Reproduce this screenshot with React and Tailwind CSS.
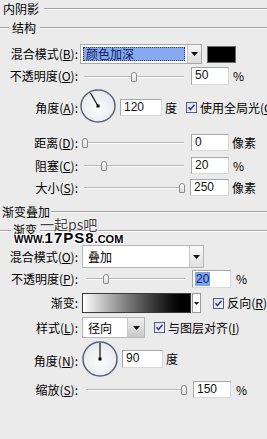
import React from "react";

const Line = ({ className = "" }) => (
  <div className={"h-[2px] border-t border-[#a3a3a3] border-b border-b-white " + className} />
);

const Label = ({ children, className = "" }) => (
  <div className={"w-[78px] shrink-0 text-right text-[12px] leading-[14px] whitespace-nowrap " + className}>{children}</div>
);

const Tri = () => (
  <svg width="7" height="4" viewBox="0 0 7 4"><path d="M0 0H7L3.5 4Z" fill="#111" /></svg>
);

const Slider = ({ v, w = "w-[106px]" }) => (
  <div className={"relative h-[12px] shrink-0 " + w}>
    <div className="absolute left-[2px] right-[4px] top-[5px] h-[2px] border-t border-[#b8b8b8] border-b border-b-white" />
    <div
      className="absolute top-[1px] w-[6px] h-[10px] rounded-t-[3px] rounded-b-[1px] border border-[#8a8a8a] bg-gradient-to-b from-white to-[#dcdcdc]"
      style={{ left: `${v * 97}px` }}
    />
  </div>
);

const Input = ({ children, className = "" }) => (
  <div className={"h-[17px] w-[38px] shrink-0 bg-white border border-[#a7a7a7] border-b-[#d8d8d8] border-r-[#d8d8d8] pl-[3px] text-[12px] leading-[15px] font-['Liberation_Sans',sans-serif] text-[#111] " + className}>
    {children}
  </div>
);

const Check = () => (
  <svg width="11" height="11" viewBox="0 0 11 11" className="shrink-0">
    <defs>
      <linearGradient id="cg" x1="0" y1="0" x2="1" y2="1">
        <stop offset="0" stopColor="#dcdce4" />
        <stop offset="1" stopColor="#f8f8fb" />
      </linearGradient>
    </defs>
    <rect x="0.5" y="0.5" width="10" height="10" fill="url(#cg)" stroke="#4c5f86" />
    <path d="M2.5 5.2L4.5 7.5L8.5 2.8" fill="none" stroke="#3a3f8f" strokeWidth="1.6" />
  </svg>
);

const Dial = ({ angle, w = 36, h = 34 }) => {
  const cx = w / 2, cy = h / 2, r = Math.min(w, h) / 2 - 1;
  const a = (angle * Math.PI) / 180;
  const x2 = cx + Math.cos(a) * (r - 1);
  const y2 = cy - Math.sin(a) * (r - 1);
  return (
    <svg width={w} height={h} viewBox={`0 0 ${w} ${h}`} className="shrink-0">
      <defs>
        <radialGradient id={"dg" + angle} cx="0.5" cy="0.6" r="0.6">
          <stop offset="0" stopColor="#fbfbfb" />
          <stop offset="1" stopColor="#e6e8ee" />
        </radialGradient>
      </defs>
      <ellipse cx={cx} cy={cy} rx={w / 2 - 1} ry={h / 2 - 1} fill={`url(#dg${angle})`} stroke="#5a6478" strokeWidth="1.5" />
      <line x1={cx} y1={cy} x2={x2} y2={y2} stroke="#111" strokeWidth="1.2" />
      <rect x={cx - 1.5} y={cy - 1.5} width="3" height="3" fill="#000" />
    </svg>
  );
};

export default function App() {
  return (
    <div className="w-[267px] h-[439px] overflow-hidden bg-[#ebebeb] text-black font-['Noto_Sans_CJK_SC','Liberation_Sans',sans-serif]">
      {/* 内阴影 header */}
      <div className="mt-[2px] h-[13px] flex items-center pl-[3px]">
        <span className="text-[12px] leading-[13px] whitespace-nowrap">内阴影</span>
        <Line className="flex-1 ml-[5px] mt-[1px]" />
      </div>
      {/* 结构 */}
      <div className="mt-[5px] h-[14px] flex items-center">
        <Line className="w-[9px] mt-[1px]" />
        <span className="ml-[3px] text-[12px] leading-[13px] whitespace-nowrap">结构</span>
        <Line className="flex-1 ml-[4px] mt-[1px]" />
      </div>

      {/* blend mode 1 */}
      <div className="mt-[10px] h-[20px] flex items-center">
        <Label>混合模式(<u>B</u>):</Label>
        <div className="ml-[2px] w-[122px] h-[20px] flex border border-[#a9a9a9] bg-white">
          <div className="flex-1 p-[2px]">
            <div className="h-full bg-[#86a9ef] border border-dotted border-[#2a3a70] text-[12px] leading-[12px] pl-[2px] text-[#0d1a5c]">颜色加深</div>
          </div>
          <div className="w-[14px] flex items-center justify-center border-l border-[#c8c8c8] bg-gradient-to-b from-[#f6f6f6] to-[#dcdcdc]">
            <Tri />
          </div>
        </div>
        <div className="ml-[5px] w-[29px] h-[17px] bg-black border border-[#6a6a6a]" />
      </div>

      {/* opacity 1 */}
      <div className="mt-[2px] h-[19px] flex items-center">
        <Label>不透明度(<u>O</u>):</Label>
        <div className="ml-[4px] mt-[3px]"><Slider v={0.5} /></div>
        <Input className="ml-[3px] h-[18px]">50</Input>
        <span className="ml-[4px] text-[12px] leading-[14px]">%</span>
      </div>

      {/* angle 1 */}
      <div className="mt-[4px] h-[34px] flex items-center">
        <Label className="mt-[4px]">角度(<u>A</u>):</Label>
        <div className="ml-[2px]"><Dial angle={120} /></div>
        <Input className="ml-[4px] w-[42px] mt-[3px]">120</Input>
        <span className="ml-[3px] text-[12px] leading-[14px] mt-[3px]">度</span>
        <div className="ml-[9px] mt-[3px] flex items-center">
          <Check />
          <span className="ml-[3px] text-[12px] leading-[14px] whitespace-nowrap">使用全局光(<u>G</u>)</span>
        </div>
      </div>

      {/* distance */}
      <div className="mt-[11px] h-[17px] flex items-center">
        <Label>距离(<u>D</u>):</Label>
        <div className="ml-[4px]"><Slider v={0} /></div>
        <Input className="ml-[3px]">0</Input>
        <span className="ml-[3px] text-[12px] leading-[14px]">像素</span>
      </div>

      {/* choke */}
      <div className="mt-[6px] h-[17px] flex items-center">
        <Label>阻塞(<u>C</u>):</Label>
        <div className="ml-[4px]"><Slider v={0.2} /></div>
        <Input className="ml-[3px]">20</Input>
        <span className="ml-[4px] text-[12px] leading-[14px]">%</span>
      </div>

      {/* size */}
      <div className="mt-[5px] h-[17px] flex items-center">
        <Label>大小(<u>S</u>):</Label>
        <div className="ml-[4px]"><Slider v={1} /></div>
        <Input className="ml-[2px] w-[39px]">250</Input>
        <span className="ml-[3px] text-[12px] leading-[14px]">像素</span>
      </div>

      {/* 渐变叠加 */}
      <div className="mt-[9px] h-[13px] flex items-center pl-[2px]">
        <span className="text-[12px] leading-[13px] whitespace-nowrap">渐变叠加</span>
        <Line className="flex-1 ml-[1px] mt-[1px]" />
      </div>

      <div className="relative">
        {/* 渐变 */}
        <div className="mt-[5px] h-[13px] flex items-center">
          <Line className="w-[11px] mt-[2px]" />
          <span className="ml-[2px] text-[12px] leading-[13px] whitespace-nowrap">渐变</span>
          <Line className="flex-1 ml-[3px] mt-[2px]" />
        </div>
        {/* watermark */}
        <div className="absolute left-[40px] top-[-6px] text-[14px] leading-[15px] text-[#444] whitespace-nowrap [text-shadow:0_0_2px_#fff,0_0_2px_#fff]">一起ps吧</div>
        <div className="absolute left-[14px] top-[9px] flex items-baseline whitespace-nowrap font-['Liberation_Sans',sans-serif] font-black text-black [text-shadow:1px_1px_0_#fff,-1px_-1px_0_#fff,1px_-1px_0_#fff,-1px_1px_0_#fff]">
          <span className="text-[10px] leading-[10px] tracking-[0px]">WWW.</span>
          <span className="text-[15px] leading-[12px] tracking-[1px]">17PS8</span>
          <span className="text-[11px] leading-[10px]">.COM</span>
        </div>

        {/* blend mode 2 */}
        <div className="mt-[9px] h-[23px] flex items-center">
          <Label>混合模式(<u>O</u>):</Label>
          <div className="ml-[4px] w-[122px] h-[23px] flex border border-[#b5b5b5] bg-white">
            <div className="flex-1 pl-[5px] text-[12px] leading-[21px]">叠加</div>
            <div className="w-[14px] flex items-center justify-center border-l border-[#c8c8c8] bg-gradient-to-b from-[#fafafa] to-[#e0e0e0]">
              <Tri />
            </div>
          </div>
        </div>

        {/* opacity 2 */}
        <div className="mt-[2px] h-[18px] flex items-center">
          <Label>不透明度(<u>P</u>):</Label>
          <div className="ml-[6px]"><Slider v={0.2} w="w-[105px]" /></div>
          <div className="ml-[3px] h-[18px] w-[39px] shrink-0 flex items-center bg-white border border-[#a7a7a7] border-b-[#d8d8d8] border-r-[#d8d8d8] pl-[2px]">
            <span className="bg-[#7ea3e6] text-[#0b2170] text-[12px] leading-[14px] font-['Liberation_Sans',sans-serif] px-[1px]">20</span>
          </div>
          <span className="ml-[5px] text-[12px] leading-[14px]">%</span>
        </div>

        {/* gradient */}
        <div className="mt-[5px] h-[20px] flex items-center">
          <Label>渐变:</Label>
          <div className="ml-[4px] w-[112px] h-[20px] border border-[#3a3a3a] bg-gradient-to-r from-white to-black" />
          <div className="ml-[1px] w-[10px] h-[20px] flex items-center justify-center border border-[#9a9a9a] bg-white">
            <svg width="5" height="3" viewBox="0 0 5 3"><path d="M0 0H5L2.5 3Z" fill="#111" /></svg>
          </div>
          <div className="ml-[12px] flex items-center">
            <Check />
            <span className="ml-[3px] text-[12px] leading-[14px] whitespace-nowrap">反向(<u>R</u>)</span>
          </div>
        </div>

        {/* style */}
        <div className="mt-[4px] h-[21px] flex items-center">
          <Label>样式(<u>L</u>):</Label>
          <div className="ml-[4px] w-[63px] h-[21px] flex border border-[#b5b5b5] bg-white">
            <div className="flex-1 pl-[5px] text-[12px] leading-[19px]">径向</div>
            <div className="w-[17px] flex items-center justify-center border-l border-[#c8c8c8] bg-gradient-to-b from-[#f0f0f0] to-[#c8c8c8]">
              <Tri />
            </div>
          </div>
          <div className="ml-[9px] flex items-center">
            <Check />
            <span className="ml-[3px] text-[12px] leading-[14px] whitespace-nowrap">与图层对齐(<u>I</u>)</span>
          </div>
        </div>

        {/* angle 2 */}
        <div className="mt-[3px] h-[36px] flex items-center">
          <Label className="mt-[4px]">角度(<u>N</u>):</Label>
          <div className="ml-[4px]"><Dial angle={90} w={36} h={36} /></div>
          <Input className="ml-[4px] w-[41px] h-[18px]">90</Input>
          <span className="ml-[3px] text-[12px] leading-[14px]">度</span>
        </div>

        {/* scale */}
        <div className="mt-[4px] h-[17px] flex items-center">
          <Label>缩放(<u>S</u>):</Label>
          <div className="ml-[6px]"><Slider v={1} w="w-[105px]" /></div>
          <Input className="ml-[4px]">150</Input>
          <span className="ml-[5px] text-[12px] leading-[14px]">%</span>
        </div>
      </div>
    </div>
  );
}
